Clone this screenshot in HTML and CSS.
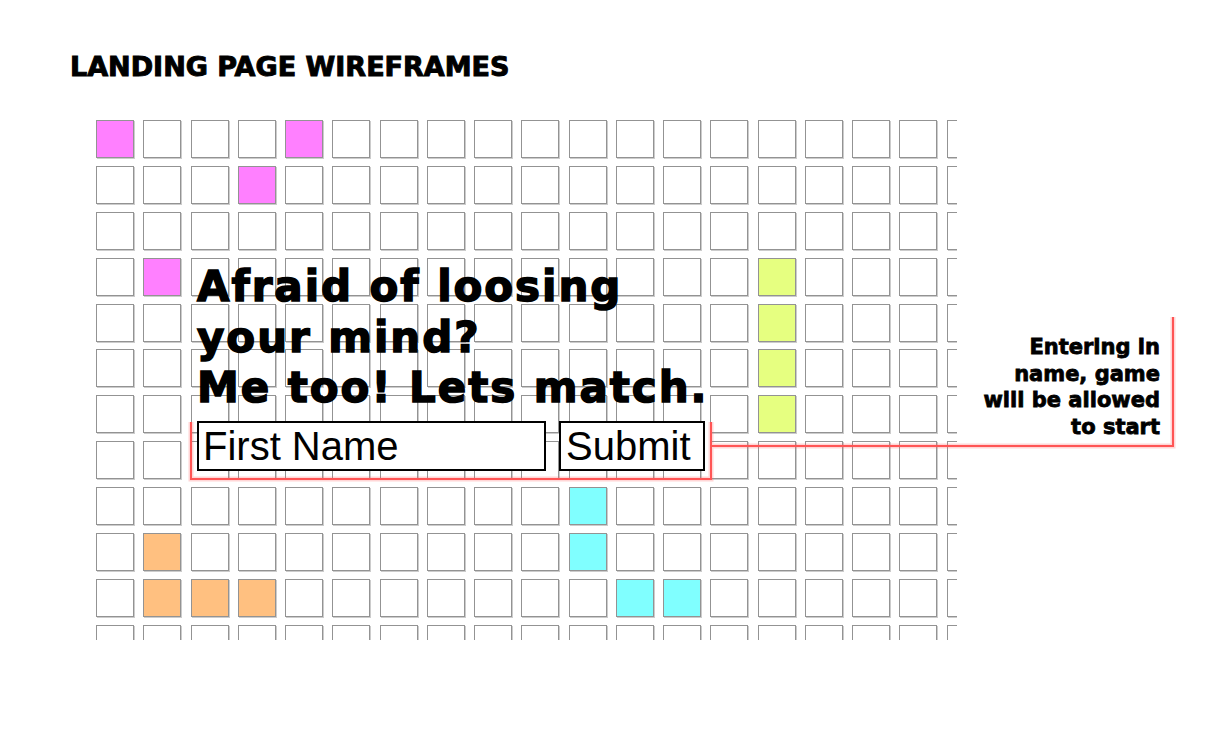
FILE: index.html
```html
<!DOCTYPE html>
<html lang="en">
<head>
<meta charset="utf-8">
<title>Landing Page Wireframes</title>
<link rel="stylesheet" href="styles.css">
</head>
<body>
<div class="page">
  <h1 class="title">LANDING PAGE WIREFRAMES</h1>
  <div class="board">
    <div class="grid-wrap">
      <div class="grid">
        <span class="c p"></span><span class="c"></span><span class="c"></span><span class="c"></span><span class="c p"></span><span class="c"></span><span class="c"></span><span class="c"></span><span class="c"></span><span class="c"></span><span class="c"></span><span class="c"></span><span class="c"></span><span class="c"></span><span class="c"></span><span class="c"></span><span class="c"></span><span class="c"></span><span class="c"></span>
        <span class="c"></span><span class="c"></span><span class="c"></span><span class="c p"></span><span class="c"></span><span class="c"></span><span class="c"></span><span class="c"></span><span class="c"></span><span class="c"></span><span class="c"></span><span class="c"></span><span class="c"></span><span class="c"></span><span class="c"></span><span class="c"></span><span class="c"></span><span class="c"></span><span class="c"></span>
        <span class="c"></span><span class="c"></span><span class="c"></span><span class="c"></span><span class="c"></span><span class="c"></span><span class="c"></span><span class="c"></span><span class="c"></span><span class="c"></span><span class="c"></span><span class="c"></span><span class="c"></span><span class="c"></span><span class="c"></span><span class="c"></span><span class="c"></span><span class="c"></span><span class="c"></span>
        <span class="c"></span><span class="c p"></span><span class="c"></span><span class="c"></span><span class="c"></span><span class="c"></span><span class="c"></span><span class="c"></span><span class="c"></span><span class="c"></span><span class="c"></span><span class="c"></span><span class="c"></span><span class="c"></span><span class="c y"></span><span class="c"></span><span class="c"></span><span class="c"></span><span class="c"></span>
        <span class="c"></span><span class="c"></span><span class="c"></span><span class="c"></span><span class="c"></span><span class="c"></span><span class="c"></span><span class="c"></span><span class="c"></span><span class="c"></span><span class="c"></span><span class="c"></span><span class="c"></span><span class="c"></span><span class="c y"></span><span class="c"></span><span class="c"></span><span class="c"></span><span class="c"></span>
        <span class="c"></span><span class="c"></span><span class="c"></span><span class="c"></span><span class="c"></span><span class="c"></span><span class="c"></span><span class="c"></span><span class="c"></span><span class="c"></span><span class="c"></span><span class="c"></span><span class="c"></span><span class="c"></span><span class="c y"></span><span class="c"></span><span class="c"></span><span class="c"></span><span class="c"></span>
        <span class="c"></span><span class="c"></span><span class="c"></span><span class="c"></span><span class="c"></span><span class="c"></span><span class="c"></span><span class="c"></span><span class="c"></span><span class="c"></span><span class="c"></span><span class="c"></span><span class="c"></span><span class="c"></span><span class="c y"></span><span class="c"></span><span class="c"></span><span class="c"></span><span class="c"></span>
        <span class="c"></span><span class="c"></span><span class="c"></span><span class="c"></span><span class="c"></span><span class="c"></span><span class="c"></span><span class="c"></span><span class="c"></span><span class="c"></span><span class="c"></span><span class="c"></span><span class="c"></span><span class="c"></span><span class="c"></span><span class="c"></span><span class="c"></span><span class="c"></span><span class="c"></span>
        <span class="c"></span><span class="c"></span><span class="c"></span><span class="c"></span><span class="c"></span><span class="c"></span><span class="c"></span><span class="c"></span><span class="c"></span><span class="c"></span><span class="c b"></span><span class="c"></span><span class="c"></span><span class="c"></span><span class="c"></span><span class="c"></span><span class="c"></span><span class="c"></span><span class="c"></span>
        <span class="c"></span><span class="c o"></span><span class="c"></span><span class="c"></span><span class="c"></span><span class="c"></span><span class="c"></span><span class="c"></span><span class="c"></span><span class="c"></span><span class="c b"></span><span class="c"></span><span class="c"></span><span class="c"></span><span class="c"></span><span class="c"></span><span class="c"></span><span class="c"></span><span class="c"></span>
        <span class="c"></span><span class="c o"></span><span class="c o"></span><span class="c o"></span><span class="c"></span><span class="c"></span><span class="c"></span><span class="c"></span><span class="c"></span><span class="c"></span><span class="c"></span><span class="c b"></span><span class="c b"></span><span class="c"></span><span class="c"></span><span class="c"></span><span class="c"></span><span class="c"></span><span class="c"></span>
        <span class="c"></span><span class="c"></span><span class="c"></span><span class="c"></span><span class="c"></span><span class="c"></span><span class="c"></span><span class="c"></span><span class="c"></span><span class="c"></span><span class="c"></span><span class="c"></span><span class="c"></span><span class="c"></span><span class="c"></span><span class="c"></span><span class="c"></span><span class="c"></span><span class="c"></span>
      </div>
      <div class="pitch">
        <h2 class="headline">Afraid of loosing<br>your mind?<br>Me too! Lets match.</h2>
        <div class="form">
          <div class="field">First Name</div>
          <button class="submit" type="button">Submit</button>
        </div>
      </div>
    </div>
    <p class="note">Entering in<br>name, game<br>will be allowed<br>to start</p>
    <svg class="callout" width="1220" height="520" viewBox="0 0 1220 520" aria-hidden="true">
      <g fill="none" stroke-linejoin="miter">
        <path class="glow" d="M191 302 V359 H711 V302 M711 326 H1173 V197"/>
        <path class="line" d="M191 302 V359 H711 V302 M711 326 H1173 V197"/>
      </g>
    </svg>
  </div>
</div>
</body>
</html>
```

FILE: styles.css
```css
html, body {
  margin: 0;
  padding: 0;
  background: #ffffff;
}

body {
  font-family: "DejaVu Sans", "Liberation Sans", sans-serif;
  color: #000000;
}

.page {
  position: relative;
  width: 1220px;
  height: 741px;
  overflow: hidden;
}

.title {
  margin: 0;
  padding: 51px 0 0 70px;
  height: 32px;
  font-size: 27px;
  line-height: 32px;
  font-weight: bold;
  -webkit-text-stroke: 1px #000000;
}

.board {
  position: relative;
  display: flex;
  align-items: flex-start;
  margin-top: 37px;
  padding-left: 96px;
}

.grid-wrap {
  position: relative;
  flex: none;
  width: 861px;
  height: 520px;
  overflow: hidden;
}

.grid {
  display: grid;
  grid-template-columns: repeat(19, 38px);
  grid-auto-rows: 38px;
  column-gap: 9.26px;
  row-gap: 7.9px;
}

.c {
  box-sizing: border-box;
  display: block;
  border: 1px solid #939393;
  box-shadow: 1px 1px 0 #cccccc;
  background: #ffffff;
}

.c.p { background: #ff80ff; }
.c.y { background: #e6ff80; }
.c.b { background: #80ffff; }
.c.o { background: #ffc080; }

.pitch {
  position: absolute;
  left: 101px;
  top: 142px;
}

.headline {
  margin: 0;
  font-size: 42px;
  line-height: 50.5px;
  letter-spacing: 1.95px;
  font-weight: bold;
  white-space: nowrap;
  -webkit-text-stroke: 1.5px #000000;
}

.form {
  display: flex;
  gap: 13px;
  margin-top: 7.5px;
}

.field,
.submit {
  box-sizing: border-box;
  height: 50px;
  margin: 0;
  border: 2px solid #000000;
  border-radius: 0;
  background: #ffffff;
  color: #000000;
  font-family: "Liberation Sans", Arial, sans-serif;
  font-size: 40px;
  font-weight: normal;
  line-height: 46px;
  text-align: left;
  white-space: nowrap;
}

.field {
  width: 349px;
  padding: 0 0 0 4px;
}

.submit {
  width: 146px;
  padding: 0 0 0 5px;
}

.note {
  flex: none;
  width: 200px;
  margin: 214px 0 0 3px;
  text-align: right;
  font-size: 21px;
  font-weight: bold;
  line-height: 26.6px;
  -webkit-text-stroke: 0.8px #000000;
}

.callout {
  position: absolute;
  left: 0;
  top: 0;
  overflow: visible;
  pointer-events: none;
}

.callout .glow {
  stroke: rgba(255, 90, 90, 0.25);
  stroke-width: 5;
}

.callout .line {
  stroke: #ff5555;
  stroke-width: 2;
}
```
